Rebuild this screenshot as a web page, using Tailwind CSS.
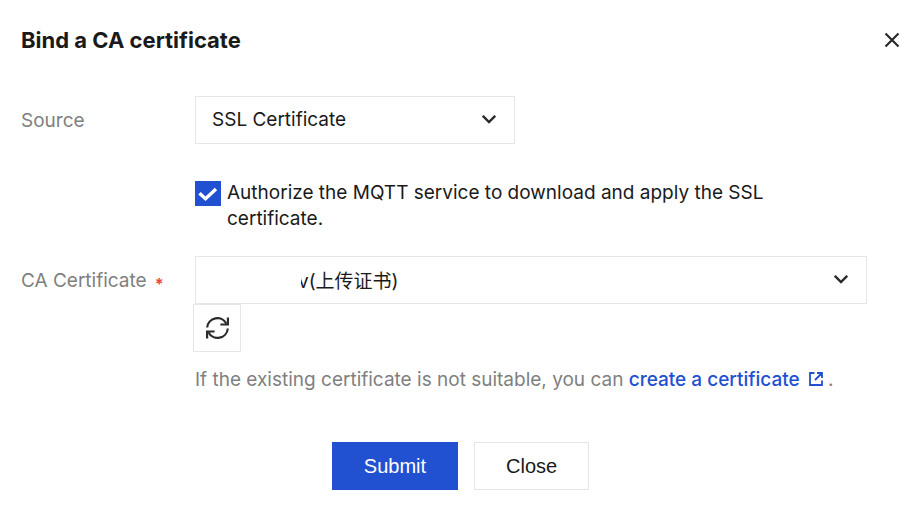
<!DOCTYPE html>
<html lang="en">
<head>
    <meta charset="UTF-8">
    <meta name="viewport" content="width=device-width, initial-scale=1.0">
    <title>Bind a CA certificate</title>
    <script src="https://cdn.jsdelivr.net/npm/@tailwindcss/browser@4"></script>
</head>
<body class="bg-white font-['Inter','Noto_Sans_CJK_SC',sans-serif] text-[19px] leading-[26px] text-[#1a1a1a]">
    <div role="dialog" aria-labelledby="dialog-title" class="pl-[21px] pr-5 pt-6">
        <!-- Header -->
        <header class="flex h-8 items-center justify-between">
            <h2 id="dialog-title" class="text-[22px] font-bold">Bind a CA certificate</h2>
            <button type="button" aria-label="Close dialog">
                <svg class="size-4" viewBox="0 0 16 16" fill="none" stroke="#2b2b2e" stroke-width="2.2">
                    <path d="M1.5 1.5l13 13M14.5 1.5l-13 13"/>
                </svg>
            </button>
        </header>

        <form class="pt-10">
            <!-- Source -->
            <div class="flex">
                <label for="source" class="w-[174px] shrink-0 pt-3 text-[#808080]">Source</label>
                <div class="relative w-80">
                    <select id="source" class="h-12 w-full appearance-none border border-[#e5e5ec] bg-white pl-4 pr-12">
                        <option>SSL Certificate</option>
                    </select>
                    <svg class="pointer-events-none absolute right-[19px] top-[19px] h-[9px] w-[14px]" viewBox="0 0 14 9" fill="none" stroke="#2b2b2e" stroke-width="2.4">
                        <path d="M.8 .8L7 7 13.2 .8"/>
                    </svg>
                </div>
            </div>

            <!-- Authorization -->
            <label class="ml-[174px] mt-9 flex max-w-[600px] items-start">
                <span class="relative mr-1.5 mt-px size-[26px] shrink-0">
                    <input type="checkbox" checked class="block h-[25px] w-full appearance-none border border-[#e5e5ec] checked:border-[#2151d1] checked:bg-[#2151d1]">
                    <svg class="pointer-events-none absolute inset-0 size-full" viewBox="0 0 26 26" fill="none" stroke="#fff" stroke-width="3.4">
                        <path d="M4.5 12.2l6 5.5L21 8"/>
                    </svg>
                </span>
                <span>Authorize the MQTT service to download and apply the SSL certificate.</span>
            </label>

            <!-- CA certificate -->
            <div class="mt-6 flex">
                <label for="ca" class="flex w-[174px] shrink-0 gap-2 pt-3 text-[#808080]">CA Certificate <span class="pt-1 text-base font-bold text-[#e5483f]">*</span></label>
                <div class="grow">
                    <div class="relative max-w-[672px]">
                        <select id="ca" class="h-12 w-full appearance-none border border-[#e5e5ec] bg-white pl-[102px] pr-12 pt-1">
                            <option>v(上传证书)</option>
                        </select>
                        <div class="pointer-events-none absolute left-4 top-2 h-8 w-[90px] bg-white"></div>
                        <svg class="pointer-events-none absolute right-[19px] top-[19px] h-[9px] w-[14px]" viewBox="0 0 14 9" fill="none" stroke="#2b2b2e" stroke-width="2.4">
                            <path d="M.8 .8L7 7 13.2 .8"/>
                        </svg>
                    </div>
                    <button type="button" aria-label="Refresh" class="-ml-0.5 flex size-12 items-center justify-center border border-[#e5e5ec] bg-white">
                        <svg class="size-6" viewBox="0 0 24 24" fill="none" stroke="#2b2b2e" stroke-width="2.2">
                            <path d="M2.2 11.5A10.2 10.2 0 0 1 21.5 7.8M22.8 12.5A10.2 10.2 0 0 1 3.5 16.2"/>
                            <path d="M22.9 1.5v7h-7.5M2.1 22.5v-7h7.5"/>
                        </svg>
                    </button>
                    <p class="mt-[15px] text-[#808080]">If the existing certificate is not suitable, you can
                        <a href="#" class="font-medium text-[#2151d1]">create a certificate
                            <svg class="ml-1 inline size-[14px] align-baseline" viewBox="0 0 14 14" fill="none" stroke="#2151d1" stroke-width="1.8">
                                <path d="M5.5 1H1v12h12V8.5M8 1h5v5M13 1L6 8"/>
                            </svg></a> .</p>
                </div>
            </div>

            <!-- Actions -->
            <div class="mt-[49px] flex justify-center gap-4 font-['Liberation_Sans',sans-serif] text-xl">
                <button type="submit" class="h-12 bg-[#2151d1] px-8 text-white shadow-[0_3px_0_#f2f6fe]">Submit</button>
                <button type="button" class="h-12 border border-[#e5e5ec] bg-white px-[31px] shadow-[0_3px_0_#fcfcfc]">Close</button>
            </div>
        </form>
    </div>
</body>
</html>
